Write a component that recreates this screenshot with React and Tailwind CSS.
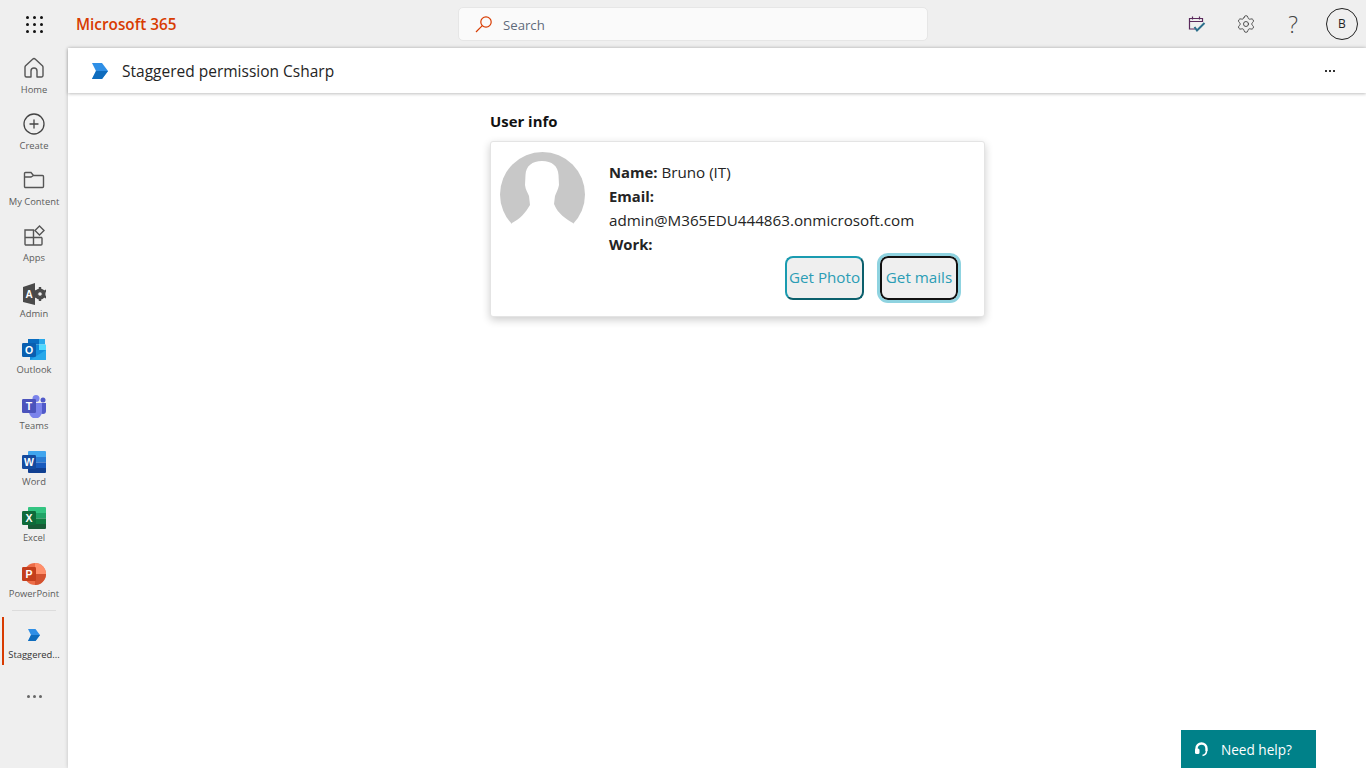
import { CirclePlus, Settings } from "lucide-react";

const font = "font-['Open_Sans','Noto_Sans',sans-serif]";

function Tile({ letter, color }) {
  return (
    <>
      <rect x="0" y="5" width="14" height="14" rx="1.2" fill={color} />
      <text x="7" y="16" textAnchor="middle" fontSize="10.5" fontWeight="700" fill="#fff" fontFamily="Liberation Sans, sans-serif">
        {letter}
      </text>
    </>
  );
}

const icons = {
  home: (
    <svg width="24" height="24" viewBox="0 0 24 24" fill="none" stroke="#555" strokeWidth="1.4" strokeLinejoin="round">
      <path d="M10.6 3.2a2 2 0 0 1 2.8 0l7 6.6a2 2 0 0 1 .6 1.4v8.3a1.5 1.5 0 0 1-1.5 1.5H15v-6a3 3 0 0 0-6 0v6H4.500a1.500 1.500 0 0 1-1.500-1.500v-8.300a2 2 0 0 1 .6-1.400z" />
    </svg>
  ),
  create: <CirclePlus size={24} strokeWidth={1.3} className="text-[#444]" />,
  content: (
    <svg width="24" height="24" viewBox="0 0 24 24" fill="none" stroke="#555" strokeWidth="1.4">
      <path d="M2.500 18.500V5.500a1 1 0 0 1 1-1h5.500l2.500 3h9a1 1 0 0 1 1 1v10a1 1 0 0 1-1 1h-17a1 1 0 0 1-1-1zM2.500 9h6.500l2.500-1.500" />
    </svg>
  ),
  apps: (
    <svg width="24" height="24" viewBox="0 0 24 24" fill="none" stroke="#555" strokeWidth="1.4">
      <path d="M3 6h8.500v15H4a1 1 0 0 1-1-1zM3 13.500h17M11.500 13.500V21H19a1 1 0 0 0 1-1v-6.500" />
      <path d="M17.500 2l4.500 4.500-4.500 4.500L13 6.500z" />
    </svg>
  ),
  admin: (
    <svg width="24" height="24" viewBox="0 0 24 24" className="translate-y-[2px]">
      <path d="M1 5l12-4v22L1 20z" fill="#4a4a4a" />
      <text x="7" y="16" textAnchor="middle" fontSize="10" fontWeight="700" fill="#fff" fontFamily="Liberation Sans, sans-serif">A</text>
      <circle cx="18" cy="12" r="4" fill="none" stroke="#4a4a4a" strokeWidth="3" />
      <path d="M18 5v14M11.500 8.500l13 7M24.500 8.500l-13 7" stroke="#4a4a4a" strokeWidth="2.400" />
      <circle cx="18" cy="12" r="1.800" fill="#efefef" />
    </svg>
  ),
  outlook: (
    <svg width="24" height="24" viewBox="0 0 24 24" className="translate-y-[2px]">
      <rect x="6" y="1" width="11" height="5.500" fill="#0a6cc0" />
      <rect x="17" y="1" width="6" height="5.500" fill="#28a8ea" />
      <rect x="6" y="6.500" width="11" height="6" fill="#0f88d8" />
      <rect x="17" y="6.500" width="7" height="6" fill="#50d9ff" />
      <path d="M8 12h16v9a1 1 0 0 1-1 1H8z" fill="#1490df" />
      <path d="M8 22l16-10v9a1 1 0 0 1-1 1z" fill="#28a8ea" />
      <Tile letter="O" color="#0a5fb0" />
    </svg>
  ),
  teams: (
    <svg width="24" height="24" viewBox="0 0 24 24" className="translate-y-[2px]">
      <circle cx="14" cy="4.500" r="3.500" fill="#7b83eb" />
      <circle cx="21" cy="6" r="2.500" fill="#5059c9" />
      <path d="M18 9h6v8a3 3 0 0 1-6 0z" fill="#5059c9" />
      <path d="M7 9h13v9a6 6 0 0 1-13 0z" fill="#7b83eb" />
      <Tile letter="T" color="#4b53bc" />
    </svg>
  ),
  word: (
    <svg width="24" height="24" viewBox="0 0 24 24" className="translate-y-[2px]">
      <path d="M7 1h16a1 1 0 0 1 1 1v5H6V2a1 1 0 0 1 1-1z" fill="#41a5ee" />
      <rect x="6" y="7" width="18" height="5.500" fill="#2b7cd3" />
      <rect x="6" y="12.500" width="18" height="5.500" fill="#185abd" />
      <path d="M6 18h18v4a1 1 0 0 1-1 1H7a1 1 0 0 1-1-1z" fill="#103f91" />
      <Tile letter="W" color="#144a9e" />
    </svg>
  ),
  excel: (
    <svg width="24" height="24" viewBox="0 0 24 24" className="translate-y-[2px]">
      <path d="M7 1h16a1 1 0 0 1 1 1v5H6V2a1 1 0 0 1 1-1z" fill="#33c481" />
      <rect x="6" y="7" width="18" height="5.500" fill="#21a366" />
      <rect x="6" y="12.500" width="18" height="5.500" fill="#107c41" />
      <path d="M6 18h18v4a1 1 0 0 1-1 1H7a1 1 0 0 1-1-1z" fill="#185c37" />
      <Tile letter="X" color="#0e6b3a" />
    </svg>
  ),
  powerpoint: (
    <svg width="24" height="24" viewBox="0 0 24 24" className="translate-y-[2px]">
      <circle cx="13" cy="12" r="11" fill="#ed6c47" />
      <path d="M13 1a11 11 0 0 1 11 11H13z" fill="#ff8f6b" />
      <path d="M13 12h11a11 11 0 0 1-11 11z" fill="#d35230" />
      <Tile letter="P" color="#c43e1c" />
    </svg>
  ),
};

function AppLogo({ size }) {
  return (
    <svg width={size} height={size} viewBox="0 0 16 16">
      <path d="M0 0h10l6 8-6 8H0l4-8z" fill="#2f8fe6" />
      <path d="M4 8h12l-6 8H0z" fill="#0f6cbd" />
    </svg>
  );
}

const railItems = [
  ["Home", "home"],
  ["Create", "create"],
  ["My Content", "content"],
  ["Apps", "apps"],
  ["Admin", "admin"],
  ["Outlook", "outlook"],
  ["Teams", "teams"],
  ["Word", "word"],
  ["Excel", "excel"],
  ["PowerPoint", "powerpoint"],
];

function RailItem({ label, icon }) {
  return (
    <div className="h-14 flex flex-col items-center pt-[2px]">
      <div className="h-6 flex items-center justify-center">{icons[icon]}</div>
      <span className="mt-[2px] text-[9.4px] leading-[16px] text-[#5c5c5c] whitespace-nowrap">{label}</span>
    </div>
  );
}

function Avatar() {
  return (
    <svg width="85" height="85" viewBox="0 0 85 85" className="shrink-0">
      <circle cx="42.500" cy="42.500" r="42.500" fill="#c8c8c8" />
      <path
        d="M42 9C32 9 26 14 25.500 23L25 33C25.500 38 28 41 29 44L30 53C26 60 20 67 12 71L12 85L73 85L73 71C66 67 58 62 54 52L55 44C56 41 58 38 59 33L58.500 23C58 14 52 9 42 9Z"
        fill="#fff"
      />
    </svg>
  );
}

export default function App() {
  return (
    <div className={`${font} h-screen flex flex-col bg-[#efefef] overflow-hidden relative`}>
      <header className="h-12 shrink-0 flex items-center">
        <div className="w-[68px] flex justify-center">
          <div className="grid grid-cols-3 gap-[4px]">
            {Array.from({ length: 9 }).map((_, i) => (
              <span key={i} className="w-[3px] h-[3px] rounded-full bg-[#111]" />
            ))}
          </div>
        </div>
        <span className="ml-2 w-[382px] text-[15.3px] font-semibold text-[#d83b01]">Microsoft 365</span>
        <div className="w-[470px] h-[34px] bg-[#fafafa] rounded-[5px] border border-[#e6e6e6] flex items-center pl-4 gap-[10px]">
          <svg width="18" height="18" viewBox="0 0 18 18" fill="none" stroke="#d83b01" strokeWidth="1.200">
            <circle cx="11" cy="7" r="5.200" />
            <path d="M7.300 10.700L1 17" />
          </svg>
          <span className="pt-[3px] text-[13.2px] text-[#5f6b7a]">Search</span>
        </div>
        <div className="ml-auto flex items-center pr-[8px]">
          <div className="w-12 flex justify-center">
            <svg width="18" height="18" viewBox="0 0 18 18" fill="none" strokeWidth="1.200">
              <path d="M7 14H1.500V3.500h13v3.500M1.500 6.500h13M4.500 1.500v3M11.500 1.500v3" stroke="#5a2a5c" />
              <path d="M6.500 12l2.500 3.500L16.500 8" stroke="#2b6f8b" strokeWidth="2" />
            </svg>
          </div>
          <div className="w-12 pl-[2px] flex justify-center">
            <Settings size={20} strokeWidth={1.100} className="text-[#444]" />
          </div>
          <div className="w-[48px] flex justify-center text-[23px] font-light leading-none text-[#444]">?</div>
          <div className="ml-[9px] w-8 h-8 rounded-full border border-[#222] flex items-center justify-center text-[12px] text-[#222]">
            B
          </div>
        </div>
      </header>

      <div className="flex-1 flex min-h-0">
        <nav className="w-[68px] shrink-0 pt-[6px] flex flex-col">
          {railItems.map(([label, icon]) => (
            <RailItem key={label} label={label} icon={icon} />
          ))}
          <div className="mx-3 -mt-[4px] h-px bg-[#dcdcdc]" />
          <div className="relative mt-[6px] h-[48px] flex flex-col items-center pt-[12px]">
            <span className="absolute left-[2px] top-0 bottom-0 w-[2px] bg-[#d83b01]" />
            <AppLogo size={12} />
            <span className="mt-[6px] text-[9.4px] leading-[16px] text-[#333] whitespace-nowrap">Staggered...</span>
          </div>
          <div className="mt-[30px] flex justify-center gap-[3px]">
            <span className="w-[3px] h-[3px] rounded-full bg-[#666]" />
            <span className="w-[3px] h-[3px] rounded-full bg-[#666]" />
            <span className="w-[3px] h-[3px] rounded-full bg-[#666]" />
          </div>
        </nav>

        <main className="flex-1 bg-white flex flex-col shadow-[0_0_4px_rgba(0,0,0,0.2)]">
          <div className="h-[45px] shrink-0 flex items-center pl-[24px] pr-[31px] gap-[14px] shadow-[0_1px_3px_rgba(0,0,0,0.25)]">
            <AppLogo size={16} />
            <span className="pt-[2px] text-[15.500px] font-medium text-[#242424]">Staggered permission Csharp</span>
            <div className="ml-auto flex gap-[2px]">
              <span className="w-[2px] h-[2px] bg-[#333]" />
              <span className="w-[2px] h-[2px] bg-[#333]" />
              <span className="w-[2px] h-[2px] bg-[#333]" />
            </div>
          </div>

          <div className="ml-[422px] w-[495px] pt-[16px]">
            <h2 className="text-[14.900px] leading-6 font-bold text-[#111]">User info</h2>
            <div className="mt-[8px] h-[176px] bg-white rounded-[3px] border border-[#e4e4e4] shadow-[0_3px_8px_rgba(0,0,0,0.2)] flex pl-[9px] pt-[10px]">
              <Avatar />
              <div className="ml-[24px] flex-1 pt-[8px] pr-[26px] flex flex-col">
                <div className="text-[15.200px] leading-6 text-[#242424]">
                  <div><b className="font-bold text-[14.800px]">Name:</b> Bruno (IT)</div>
                  <div><b className="font-bold text-[14.800px]">Email:</b></div>
                  <div>admin@M365EDU444863.onmicrosoft.com</div>
                  <div><b className="font-bold text-[14.800px]">Work:</b></div>
                </div>
                <div className="flex justify-end gap-4">
                  <button className="w-[79px] h-[44px] pb-[1px] rounded-[8px] bg-[#efefef] border-2 border-t-[#1a9bb0] border-l-[#1a9bb0] border-r-[#0b5f6c] border-b-[#0b5f6c] text-[15.200px] text-[#2b9db5] whitespace-nowrap">
                    Get Photo
                  </button>
                  <button className="w-[78px] h-[44px] pb-[1px] rounded-[8px] bg-[#efefef] border-2 border-[#111] outline-[3px] outline-offset-0 outline-[#8fd3e0] text-[15.200px] text-[#2b9db5] whitespace-nowrap">
                    Get mails
                  </button>
                </div>
              </div>
            </div>
          </div>
        </main>
      </div>

      <div className="absolute right-[50px] bottom-0 w-[135px] h-[38px] bg-[#008189] flex items-center pl-[13px] gap-[12px] text-white text-[13.600px] font-medium">
        <svg width="15" height="15" viewBox="0 0 15 15" fill="none" stroke="#fff">
          <path d="M2.500 9V6.500a5 5 0 0 1 10 0V9" strokeWidth="2.400" />
          <rect x="1" y="6.500" width="4.500" height="5.500" rx="1.500" fill="#fff" strokeWidth="0" />
          <path d="M12.500 9c0 2.500-1.500 4-4 4.500" strokeWidth="1.600" />
        </svg>
        <span className="pt-[3px]">Need help?</span>
      </div>
    </div>
  );
}
